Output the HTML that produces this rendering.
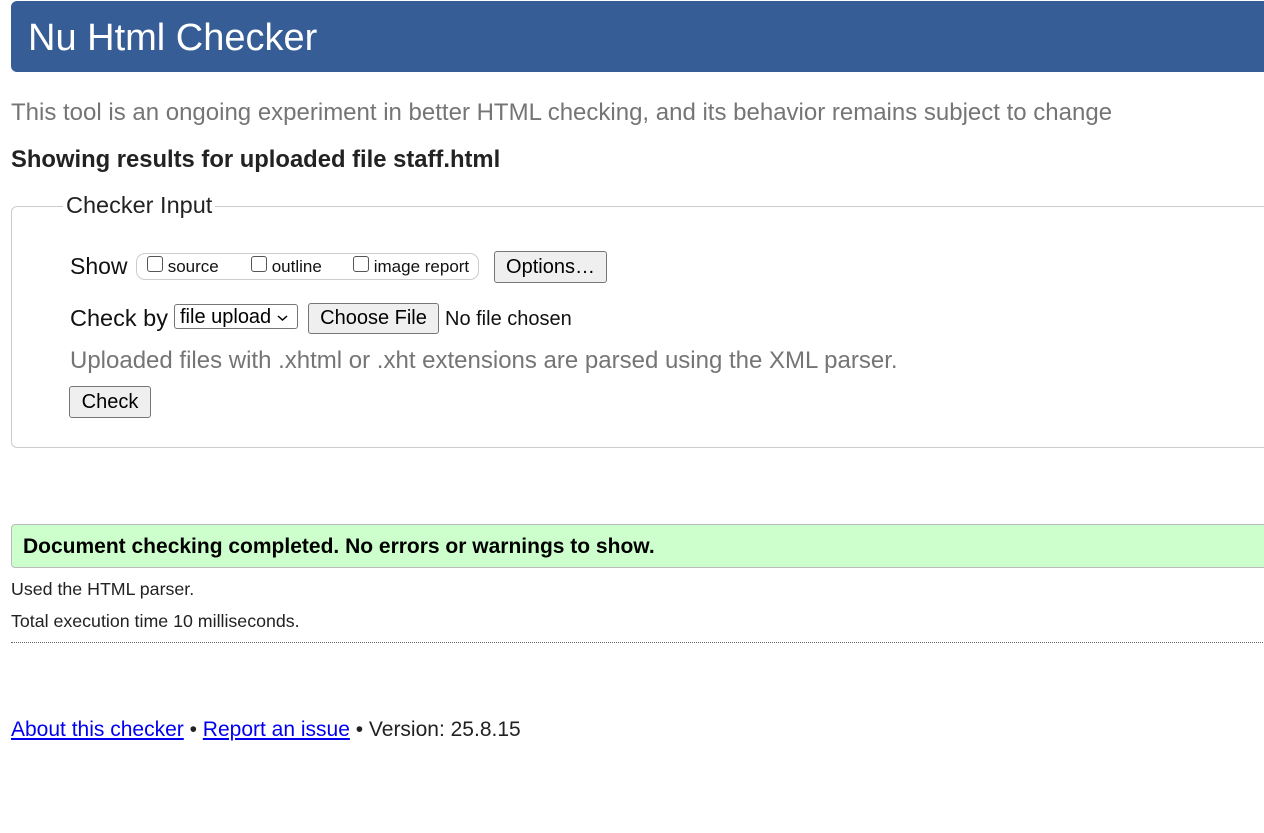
<!DOCTYPE html>
<html><head><meta charset="utf-8"><style>
body{margin:0;width:1264px;height:833px;overflow:hidden;background:#fff;font-family:"Liberation Sans",Arial,sans-serif;color:#111;position:relative}
.a{position:absolute;white-space:nowrap}
.btn{position:absolute;background:#efefef;border:1px solid #767676;border-radius:3px;box-sizing:border-box;font-size:20px;color:#000;text-align:center}
.cb{display:inline-block;width:16px;height:16px;border:1px solid #555;border-radius:3px;box-sizing:border-box;vertical-align:top;margin-top:0px}
</style></head><body>
<div class="a" style="left:11px;top:1px;width:1270px;height:71px;background:#365d95;border-radius:6px"></div>
<div class="a" style="left:28px;top:15px;font-size:38px;color:#fff;line-height:46px">Nu Html Checker</div>
<div class="a" style="left:11px;top:99px;font-size:24px;color:#757575;line-height:28px">This tool is an ongoing experiment in better HTML checking, and its behavior remains subject to change</div>
<div class="a" style="left:11px;top:146px;font-size:23.8px;font-weight:bold;color:#222;line-height:28px">Showing results for uploaded file staff.html</div>
<div class="a" style="left:11px;top:206px;width:1270px;height:242px;border:1px solid #ccc;border-radius:6px;box-sizing:border-box"></div>
<div class="a" style="left:63px;top:191px;padding:0 3px;background:#fff;font-size:23.5px;line-height:28px;color:#222">Checker Input</div>
<div class="a" style="left:70px;top:252px;font-size:23px;line-height:28px">Show</div>
<div class="a" style="left:136px;top:253px;width:343px;height:27px;border:1px solid #ccc;border-radius:9px;box-sizing:border-box"></div>
<div class="a" style="left:147px;top:256px;font-size:17px;line-height:22px"><span class="cb"></span> source</div>
<div class="a" style="left:251px;top:256px;font-size:17px;line-height:22px"><span class="cb"></span> outline</div>
<div class="a" style="left:353px;top:256px;font-size:17px;line-height:22px"><span class="cb"></span> image report</div>
<div class="btn" style="left:494px;top:251px;width:113px;height:32px;line-height:30px">Options…</div>
<div class="a" style="left:70px;top:304px;font-size:23.5px;line-height:28px">Check by</div>
<div class="a" style="left:174px;top:304px;width:124px;height:25px;border:1px solid #767676;border-radius:3px;box-sizing:border-box;font-size:20px;line-height:24px;padding-left:5px;color:#000">file upload <svg width="11" height="8" style="vertical-align:middle" viewBox="0 0 11 8"><path d="M1 2l4.5 4 4.5-4" fill="none" stroke="#000" stroke-width="1.5"/></svg></div>
<div class="btn" style="left:308px;top:303px;width:131px;height:31px;line-height:29px">Choose File</div>
<div class="a" style="left:445px;top:307px;font-size:20px;line-height:24px">No file chosen</div>
<div class="a" style="left:70px;top:347px;font-size:24px;line-height:28px;color:#757575">Uploaded files with .xhtml or .xht extensions are parsed using the XML parser.</div>
<div class="btn" style="left:69px;top:386px;width:82px;height:32px;line-height:30px">Check</div>
<div class="a" style="left:11px;top:524px;width:1270px;height:44px;background:#ccffcc;border:1px solid #bbb;border-radius:4px;box-sizing:border-box"></div>
<div class="a" style="left:23px;top:535px;font-size:21px;font-weight:bold;line-height:24px;color:#000">Document checking completed. No errors or warnings to show.</div>
<div class="a" style="left:11px;top:579px;font-size:17.8px;line-height:20px;color:#222">Used the HTML parser.</div>
<div class="a" style="left:11px;top:611px;font-size:17.8px;line-height:20px;color:#222">Total execution time 10 milliseconds.</div>
<div class="a" style="left:11px;top:642px;width:1260px;border-top:1px dotted #666"></div>
<div class="a" style="left:11px;top:717px;font-size:21px;line-height:26px;color:#222"><span style="color:#00e;text-decoration:underline">About this checker</span> • <span style="color:#00e;text-decoration:underline">Report an issue</span> • Version: 25.8.15</div>
</body></html>
